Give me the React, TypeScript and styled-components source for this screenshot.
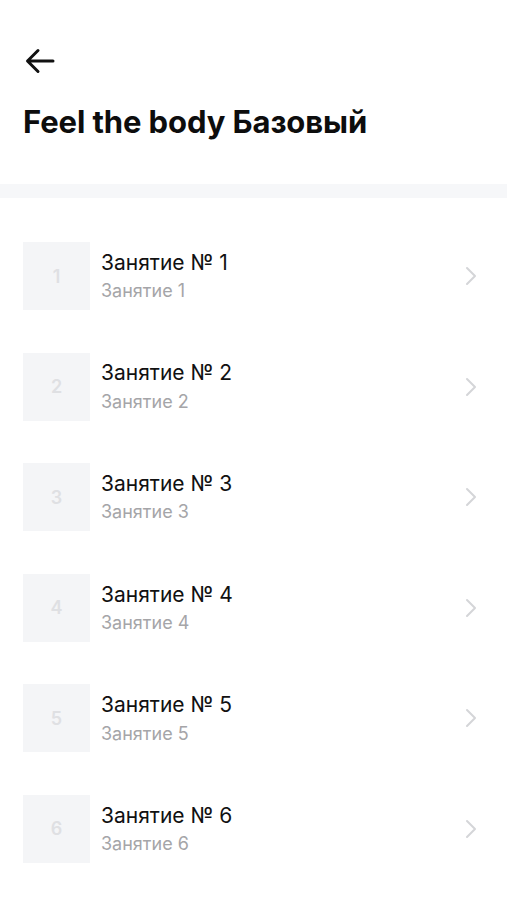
import * as React from 'react';
import styled, { createGlobalStyle } from 'styled-components';

const GlobalStyle = createGlobalStyle`
    html, body {
        margin: 0;
        padding: 0;
        background: #ffffff;
    }
    body {
        font-family: Inter, "Noto Sans", "Liberation Sans", sans-serif;
        color: #111111;
    }
`;

const lessons = [1, 2, 3, 4, 5, 6];

const App = () => {
    return (
        <>
            <GlobalStyle />
            <Page>
                <Header>
                    <BackButton aria-label="Назад">
                        <svg width="30" height="26" viewBox="0 0 30 26" fill="none">
                            <path d="M28 13H3M13 2.5L2.5 13L13 23.5" stroke="#111" strokeWidth="3" strokeLinecap="round" strokeLinejoin="round" />
                        </svg>
                    </BackButton>
                    <Title>Feel the body Базовый</Title>
                </Header>
                <Divider />
                <LessonList>
                    {lessons.map((n) => (
                        <LessonRow key={n}>
                            <Thumb>{n}</Thumb>
                            <LessonText>
                                <LessonTitle>Занятие № {n}</LessonTitle>
                                <LessonSubtitle>Занятие {n}</LessonSubtitle>
                            </LessonText>
                            <Chevron width="12" height="20" viewBox="0 0 12 20" fill="none">
                                <path d="M2 2L10 10L2 18" stroke="#d4d5d8" strokeWidth="2" strokeLinecap="round" strokeLinejoin="round" />
                            </Chevron>
                        </LessonRow>
                    ))}
                </LessonList>
            </Page>
        </>
    );
};

export default App;

const Page = styled.div`
    width: 507px;
    min-height: 900px;
    background: #ffffff;
`;

const Header = styled.div`
    display: flex;
    flex-direction: column;
    padding: 47px 23px 43px;
`;

const BackButton = styled.button`
    display: flex;
    align-items: center;
    justify-content: flex-start;
    width: 40px;
    height: 28px;
    padding: 0 0 0 2px;
    border: none;
    background: none;
    cursor: pointer;
`;

const Title = styled.h1`
    margin: 28px 0 0;
    font-size: 31px;
    font-weight: 700;
    line-height: 38px;
    letter-spacing: -0.1px;
    color: #0d0d0d;
`;

const Divider = styled.div`
    height: 14px;
    background: #f6f7f9;
`;

const LessonList = styled.div`
    display: flex;
    flex-direction: column;
    gap: 42.6px;
    padding: 44px 23px 0;
`;

const LessonRow = styled.div`
    display: flex;
    align-items: center;
    height: 68px;
`;

const Thumb = styled.div`
    flex: 0 0 67px;
    height: 68px;
    display: flex;
    align-items: center;
    justify-content: center;
    background: #f4f5f7;
    color: #dfe0e3;
    font-size: 18px;
    font-weight: 600;
`;

const LessonText = styled.div`
    flex: 1;
    display: flex;
    flex-direction: column;
    gap: 5.5px;
    padding-left: 11px;
`;

const LessonTitle = styled.div`
    font-size: 21px;
    line-height: 25px;
    color: #111111;
`;

const LessonSubtitle = styled.div`
    font-size: 18px;
    line-height: 22px;
    color: #a5a5a8;
`;

const Chevron = styled.svg`
    flex: 0 0 auto;
    margin-right: 7px;
`;
